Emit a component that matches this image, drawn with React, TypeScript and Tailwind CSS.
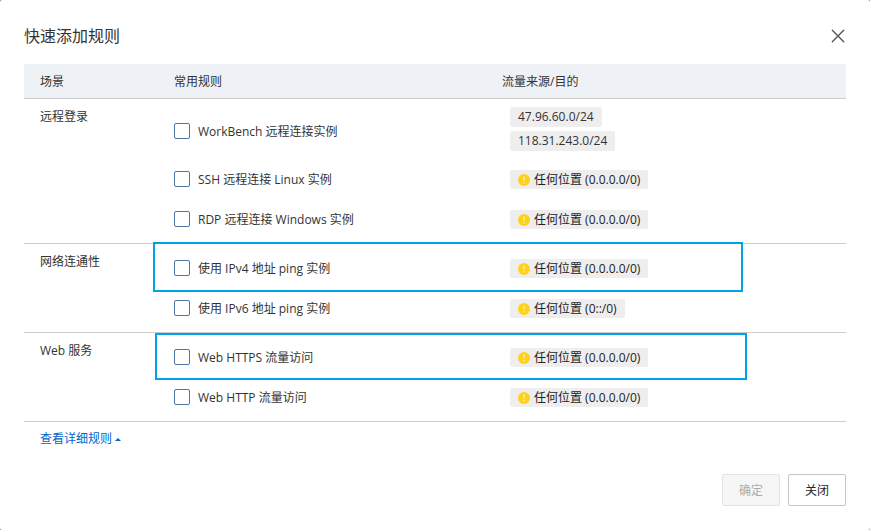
type Rule = { name: string; any?: string; cidrs?: string[]; mark?: 'ping' | 'https' }
type Group = { scene: string; rules: Rule[] }

const groups: Group[] = [
  {
    scene: '远程登录',
    rules: [
      { name: 'WorkBench 远程连接实例', cidrs: ['47.96.60.0/24', '118.31.243.0/24'] },
      { name: 'SSH 远程连接 Linux 实例', any: '0.0.0.0/0' },
      { name: 'RDP 远程连接 Windows 实例', any: '0.0.0.0/0' },
    ],
  },
  {
    scene: '网络连通性',
    rules: [
      { name: '使用 IPv4 地址 ping 实例', any: '0.0.0.0/0', mark: 'ping' },
      { name: '使用 IPv6 地址 ping 实例', any: '0::/0' },
    ],
  },
  {
    scene: 'Web 服务',
    rules: [
      { name: 'Web HTTPS 流量访问', any: '0.0.0.0/0', mark: 'https' },
      { name: 'Web HTTP 流量访问', any: '0.0.0.0/0' },
    ],
  },
]

const marks = {
  ping: 'left-[129px] right-[103px] -top-0.5 h-[50px]',
  https: 'left-[131px] right-[99px] top-0 h-[47px]',
}

function WarnIcon() {
  return (
    <svg viewBox="0 0 12 12" className="size-3 shrink-0" aria-hidden="true">
      <circle cx="6" cy="6" r="6" fill="#ffd21a" />
      <path d="M5.2 2.5h1.6l-.2 4.2H5.4z" fill="#fff2b0" />
      <circle cx="6" cy="8.5" r=".8" fill="#fff2b0" />
    </svg>
  )
}

function Source({ rule }: { rule: Rule }) {
  if (rule.cidrs) {
    return (
      <div className="flex h-14 flex-col items-start gap-1 pt-1">
        {rule.cidrs.map(c => (
          <span key={c} className="h-5 rounded-xs bg-[#eeeeee] px-2 leading-5">{c}</span>
        ))}
      </div>
    )
  }
  return (
    <div className="flex h-10 items-center">
      <span className="mt-px flex h-[19px] items-center gap-1 rounded-xs bg-[#eeeeee] px-2 whitespace-nowrap text-[#222]">
        <WarnIcon />
        任何位置 ({rule.any})
      </span>
    </div>
  )
}

function RuleRow({ group, rule, index }: { group: Group; rule: Rule; index: number }) {
  const first = index === 0
  const last = index === group.rules.length - 1
  const pad = `${first ? 'pt-1' : 'pt-0'} ${last ? 'border-b border-[#cccccc] pb-1' : 'pb-0'}`
  return (
    <tr className="relative">
      {first && (
        <th scope="rowgroup" rowSpan={group.rules.length} className="border-b border-[#cccccc] px-4 pt-[9px] text-left align-top leading-[18px] font-normal">
          {group.scene}
        </th>
      )}
      <td className={`px-4 ${pad}`}>
        <label className={`flex items-center gap-2 ${rule.cidrs ? 'h-14' : 'h-10'}`}>
          <input type="checkbox" className="size-4 shrink-0 appearance-none rounded-xs border border-[#4d76a5] bg-white checked:bg-[#4d76a5]" />
          <span className="pt-0.5">{rule.name}</span>
        </label>
        {rule.mark && <span className={`pointer-events-none absolute border-2 border-[#00a2e8] ${marks[rule.mark]}`} />}
      </td>
      <td className={`px-6 ${pad}`}>
        <Source rule={rule} />
      </td>
    </tr>
  )
}

export default function App() {
  return (
    <div className="flex min-h-screen bg-[#777777] font-['Open_Sans','Noto_Sans_CJK_SC',sans-serif] text-xs text-[#333333]">
      <section role="dialog" aria-labelledby="title" className="flex flex-1 flex-col rounded-xs bg-white p-6">
        <header className="mb-4 flex h-6 items-center justify-between">
          <h1 id="title" className="text-base leading-6">快速添加规则</h1>
          <button type="button" aria-label="关闭对话框" className="flex size-4 items-center justify-center">
            <svg viewBox="0 0 16 16" className="size-4" fill="none" stroke="#555555" strokeWidth="1.4" strokeLinecap="round">
              <path d="M2.3 2.3 13.7 13.7M13.7 2.3 2.3 13.7" />
            </svg>
          </button>
        </header>

        <table className="w-full table-fixed border-separate border-spacing-0">
          <colgroup>
            <col className="w-[134px]" />
            <col className="w-[328px]" />
            <col />
          </colgroup>
          <thead className="bg-[#eef1f6]">
            <tr className="h-[35px] text-left">
              <th scope="col" className="border-b border-[#cccccc] px-4 pt-0.5 font-normal">场景</th>
              <th scope="col" className="border-b border-[#cccccc] px-4 pt-0.5 font-normal">常用规则</th>
              <th scope="col" className="border-b border-[#cccccc] px-4 pt-0.5 font-normal">流量来源/目的</th>
            </tr>
          </thead>
          {groups.map(g => (
            <tbody key={g.scene}>
              {g.rules.map((r, i) => (
                <RuleRow key={r.name} group={g} rule={r} index={i} />
              ))}
            </tbody>
          ))}
        </table>

        <a href="#rules" className="mt-2 flex items-center gap-[3px] self-start pl-4 leading-[18px] text-[#0064c8]">
          查看详细规则
          <svg viewBox="0 0 6 3" className="h-[3px] w-1.5" fill="currentColor" aria-hidden="true">
            <path d="M3 0 6 3H0z" />
          </svg>
        </a>

        <footer className="mt-auto flex justify-end gap-2">
          <button type="button" disabled className="h-8 rounded-xs border border-[#e3e3e3] bg-[#f6f6f6] px-4 pt-0.5 text-[#aaaaaa]">确定</button>
          <button type="button" className="h-8 rounded-xs border border-[#c4c6cf] px-4 pt-0.5 text-[#222222]">关闭</button>
        </footer>
      </section>
    </div>
  )
}
